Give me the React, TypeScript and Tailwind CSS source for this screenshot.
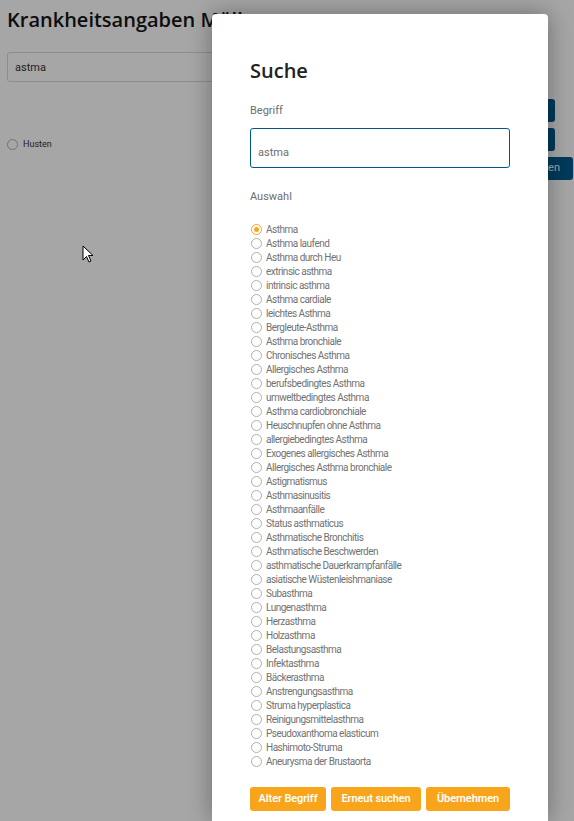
import React from "react";

const OPTIONS = [
  "Asthma",
  "Asthma laufend",
  "Asthma durch Heu",
  "extrinsic asthma",
  "intrinsic asthma",
  "Asthma cardiale",
  "leichtes Asthma",
  "Bergleute-Asthma",
  "Asthma bronchiale",
  "Chronisches Asthma",
  "Allergisches Asthma",
  "berufsbedingtes Asthma",
  "umweltbedingtes Asthma",
  "Asthma cardiobronchiale",
  "Heuschnupfen ohne Asthma",
  "allergiebedingtes Asthma",
  "Exogenes allergisches Asthma",
  "Allergisches Asthma bronchiale",
  "Astigmatismus",
  "Asthmasinusitis",
  "Asthmaanfälle",
  "Status asthmaticus",
  "Asthmatische Bronchitis",
  "Asthmatische Beschwerden",
  "asthmatische Dauerkrampfanfälle",
  "asiatische Wüstenleishmaniase",
  "Subasthma",
  "Lungenasthma",
  "Herzasthma",
  "Holzasthma",
  "Belastungsasthma",
  "Infektasthma",
  "Bäckerasthma",
  "Anstrengungsasthma",
  "Struma hyperplastica",
  "Reinigungsmittelasthma",
  "Pseudoxanthoma elasticum",
  "Hashimoto-Struma",
  "Aneurysma der Brustaorta",
];

const Radio = ({ checked }: { checked?: boolean }) => (
  <span
    className={
      checked
        ? "flex h-[11px] w-[11px] shrink-0 items-center justify-center rounded-full border border-[#f9a51b] bg-white"
        : "flex h-[11px] w-[11px] shrink-0 items-center justify-center rounded-full border border-[#b0b0b0] bg-white"
    }
  >
    {checked && <span className="h-[5px] w-[5px] rounded-full bg-[#f9a51b]" />}
  </span>
);

const OrangeButton = ({ children, className }: { children: React.ReactNode; className: string }) => (
  <button
    className={
      "h-[24px] whitespace-nowrap rounded-[3px] bg-[#f9a51b] text-[11px] font-semibold tracking-[-0.01em] text-white " +
      className
    }
  >
    {children}
  </button>
);

export default function App() {
  return (
    <div className="relative h-[821px] w-[574px] overflow-hidden bg-white font-['Roboto',sans-serif]">
      {/* page behind the dialog */}
      <div className="px-[7px] pt-[6px]">
        <h1 className="font-['Open_Sans',sans-serif] text-[20px] font-semibold leading-[28px] text-[#151515]">
          Krankheitsangaben Müller
        </h1>
        <div className="mt-[18px] flex h-[30px] w-[530px] items-center rounded-[3px] border border-[#d8d8d8] bg-white px-[7px] pt-[2px] text-[11px] text-[#333]">
          astma
        </div>
        <div className="mt-[17px] flex items-start justify-between">
          <div className="flex items-center gap-[5px] pt-[40px] text-[9px] leading-[11px] text-[#333]">
            <Radio />
            Husten
          </div>
          <div className="flex flex-col items-end gap-[6px]">
            <div className="mr-[12px] h-[23px] w-[60px] rounded-[3px] bg-[#005a8d]" />
            <div className="mr-[12px] h-[23px] w-[60px] rounded-[3px] bg-[#005a8d]" />
            <div className="mr-[-6px] flex h-[23px] items-center rounded-[3px] bg-[#005a8d] px-[13px] text-[11px] text-white">
              Übernehmen
            </div>
          </div>
        </div>
      </div>

      {/* backdrop */}
      <div className="absolute inset-0 bg-black/35" />

      {/* dialog */}
      <div className="absolute bottom-0 left-[212px] top-[14px] w-[336px] rounded-t-[4px] bg-white shadow-[0_0_24px_rgba(0,0,0,0.35)]">
        <div className="flex flex-col px-[38px] pt-[45px]">
          <h2 className="font-['Open_Sans',sans-serif] text-[20px] font-semibold leading-[24px] text-[#222]">
            Suche
          </h2>
          <div className="mt-[21px] text-[11px] leading-[14px] text-[#6e6e6e]">Begriff</div>
          <div className="mt-[10px] flex h-[40px] w-[260px] items-end rounded-[3px] border border-[#00578a] px-[7px] pb-[6px] text-[11px] text-[#6e6e6e]">
            astma
          </div>
          <div className="mt-[22px] text-[11px] leading-[14px] text-[#6e6e6e]">Auswahl</div>
          <ul className="mt-[18px] flex flex-col">
            {OPTIONS.map((label, i) => (
              <li
                key={label}
                className="flex h-[14px] items-center gap-[4px] pl-[1px] text-[10px] tracking-[-0.05em] text-[#727272]"
              >
                <Radio checked={i === 0} />
                {label}
              </li>
            ))}
          </ul>
          <div className="mt-[19px] flex gap-[5px]">
            <OrangeButton className="w-[76px]">Alter Begriff</OrangeButton>
            <OrangeButton className="w-[90px]">Erneut suchen</OrangeButton>
            <OrangeButton className="w-[84px]">Übernehmen</OrangeButton>
          </div>
        </div>
      </div>

      {/* mouse pointer */}
      <svg className="absolute left-[82px] top-[245px]" width="12" height="19" viewBox="0 0 12 19">
        <path d="M1 1 L1 15 L4.5 11.5 L7 17 L9 16 L6.5 10.5 L11 10.5 Z" fill="white" stroke="black" strokeWidth="1" />
      </svg>
    </div>
  );
}
